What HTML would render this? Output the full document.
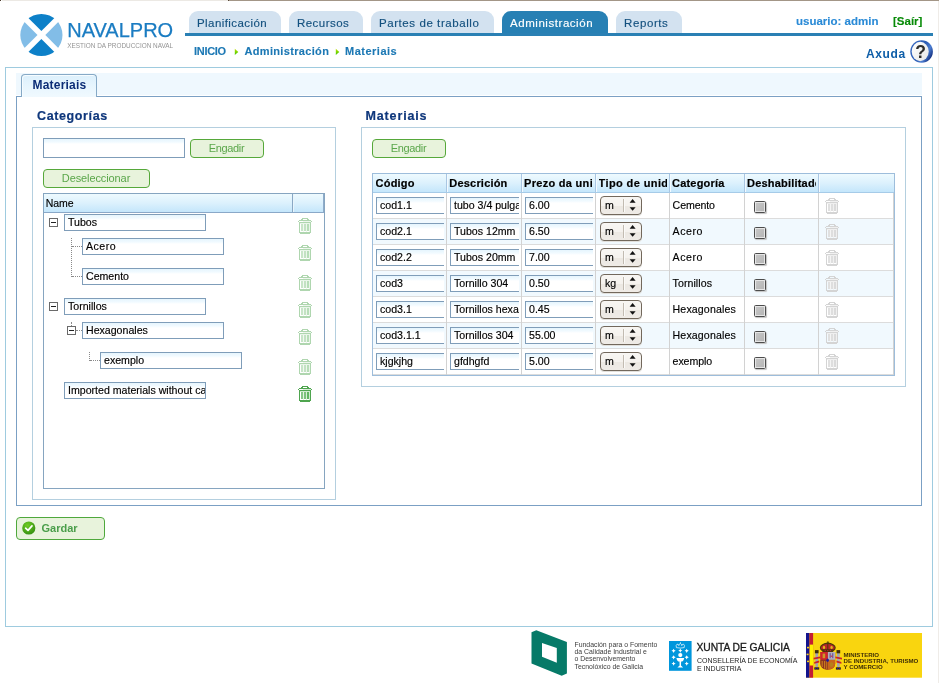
<!DOCTYPE html>
<html>
<head>
<meta charset="utf-8">
<title>NavalPro - Materiais</title>
<style>
html,body{margin:0;padding:0;}
body{width:939px;height:683px;position:relative;overflow:hidden;background:#fff;will-change:transform;font-family:"Liberation Sans",sans-serif;font-size:11px;color:#000;}
.abs{position:absolute;}
.t{position:absolute;white-space:nowrap;line-height:1;}
#strip-a{left:0;top:0;width:1px;height:1px;background:#4a3b2e;}
#strip-b{left:2px;top:0;width:226px;height:1px;background:#ece9e4;}
#strip-c{left:228px;top:0;width:711px;height:1px;background:#a39687;}
#strip-c2{left:228px;top:0;width:1px;height:1px;background:#5a4a3c;}
#strip-r{left:938px;top:1px;width:1px;height:682px;background:#efece8;}
.mtab{position:absolute;top:11px;height:22px;background:#d3e2f0;border-radius:9px 9px 0 0;color:#14517f;font-size:11.5px;white-space:nowrap;-webkit-text-stroke:.15px #14517f;}
.mtab span{position:absolute;top:7px;line-height:1;}
.mtab.on{background:#2780b4;color:#fff;-webkit-text-stroke:.15px #fff;}
#mline{left:185px;top:33px;width:748px;height:3px;background:#2a80b4;}
.bc{font-weight:bold;font-size:11px;color:#1c78b4;-webkit-text-stroke:.12px currentColor;}
#outer{left:5px;top:67px;width:926px;height:558px;border:1px solid #9ecbdf;}
#tabhead{left:16px;top:73px;width:906px;height:22px;background:#eff8fe;}
#tabpanel{left:16px;top:96px;width:904px;height:408px;border:1px solid #7ba0c4;background:#fff;}
#tab1{left:21px;top:74px;width:76px;height:23px;border:1px solid #86a9c6;border-bottom:none;border-radius:4px 4px 0 0;background:linear-gradient(#dcf0fc,#ebf7fe 70%,#f0f9fe);box-shadow:inset 1px 1px 0 #f6fcff;box-sizing:border-box;}
.gb{position:absolute;border:1px solid #b4cfdf;box-sizing:border-box;}
.h2{font-weight:bold;font-size:12.5px;color:#0f377c;-webkit-text-stroke:.2px #0f377c;}
.inp{position:absolute;box-sizing:border-box;border:1px solid #7f9db9;background:linear-gradient(#e6f5fd,#f1faff 3px,#fff 5px);height:17px;font-size:10.6px;line-height:15px;padding:0 0 0 3px;white-space:nowrap;overflow:hidden;color:#000;-webkit-text-stroke:.15px #000;}
.inp.c{border-right:none;}
.btn{position:absolute;box-sizing:border-box;border:1px solid #56a83a;border-radius:4px;background:#e8f3dc;color:#5aa64a;font-size:11px;text-align:center;padding-right:1px;}
.hdr{position:absolute;background:linear-gradient(#eefafe,#dcf1fd 50%,#c4e6fb);}
.pm{position:absolute;width:9px;height:9px;box-sizing:border-box;border:1px solid #6a6a6a;background:#fff;}
.pm i{position:absolute;left:1px;top:3px;width:5px;height:1px;background:#222;}
.dv{position:absolute;width:0;border-left:1px dotted #8a8a8a;}
.dh{position:absolute;height:0;border-top:1px dotted #8a8a8a;}
.gh{position:absolute;top:178px;height:13px;font-weight:bold;font-size:11px;line-height:1;white-space:nowrap;overflow:hidden;color:#000;letter-spacing:.2px;-webkit-text-stroke:.2px #000;}
.gc{position:absolute;-webkit-text-stroke:.15px #000;font-size:10.6px;line-height:1;white-space:nowrap;}
.row{position:absolute;left:373px;width:520px;height:25px;border-bottom:1px solid #dcdcdc;}
.row.o{background:#f1f9fe;}
.vs{position:absolute;top:193px;width:1px;height:182px;background:#d2d2d2;}
.hs{position:absolute;top:174px;width:1px;height:18px;background:#a9c6e2;}
.hs2{position:absolute;top:174px;width:1px;height:18px;background:#f2faff;}
.sel{position:absolute;width:42px;height:19px;box-sizing:border-box;border:1px solid #72685c;border-radius:4px;background:linear-gradient(#f8f6f3,#f5f2ee 50%,#ece8e2 52%,#efebe6);box-shadow:0 1px 0 #e2e0dc;}
.sel b{position:absolute;left:22px;top:2px;width:1px;height:13px;background:#c2bbb1;box-shadow:1px 0 0 #fbfaf8;}
.sel span{position:absolute;left:4px;top:3px;-webkit-text-stroke:.15px #000;font-size:10.6px;line-height:1;}
.sel svg{position:absolute;left:28px;top:2px;}
.cb{position:absolute;width:12px;height:12px;box-sizing:border-box;border:1px solid #4c4c4c;border-radius:1.5px;background:linear-gradient(135deg,#c8c8c8,#b4b4b4);box-shadow:inset 0 0 0 1px #e6e6e6,1px 1px 1px #c4c4c4;}
.ft{position:absolute;white-space:nowrap;line-height:1;}
</style>
</head>
<body>
<svg width="0" height="0" style="position:absolute">
  <defs>
    <symbol id="trash" viewBox="0 0 14 16">
      <g shape-rendering="crispEdges">
        <rect x="4" y="0" width="6" height="1" fill="#4fa54f"/>
        <rect x="3" y="1" width="2" height="1" fill="#4fa54f"/><rect x="9" y="1" width="2" height="1" fill="#4fa54f"/>
        <rect x="1" y="2" width="12" height="1" fill="#4fa54f"/>
        <rect x="0" y="3" width="1" height="1" fill="#4fa54f"/><rect x="13" y="3" width="1" height="1" fill="#4fa54f"/>
        <rect x="5" y="3" width="8" height="1" fill="#d6edd6"/>
        <rect x="1" y="4" width="12" height="1" fill="#4fa54f"/>
        <rect x="1" y="5" width="1" height="9" fill="#4fa54f"/><rect x="12" y="5" width="1" height="9" fill="#4fa54f"/>
        <rect x="2" y="5" width="10" height="1" fill="#cfe9cf"/>
        <rect x="3" y="6" width="2" height="7" fill="#86c686"/>
        <rect x="6" y="6" width="2" height="7" fill="#7cc17c"/>
        <rect x="9" y="6" width="2" height="7" fill="#62b562"/>
        <rect x="11" y="6" width="1" height="8" fill="#cfe9cf"/>
        <rect x="5" y="6" width="1" height="8" fill="#e4f3e4"/><rect x="8" y="6" width="1" height="8" fill="#d6edd6"/>
        <rect x="1" y="14" width="12" height="1" fill="#4fa54f"/>
        <rect x="2" y="15" width="10" height="1" fill="#4fa54f"/>
      </g>
    </symbol>
    <symbol id="trashg" viewBox="0 0 14 16">
      <g shape-rendering="crispEdges">
        <rect x="4" y="0" width="6" height="1" fill="#d4d4d4"/>
        <rect x="3" y="1" width="2" height="1" fill="#d4d4d4"/><rect x="9" y="1" width="2" height="1" fill="#d4d4d4"/>
        <rect x="1" y="2" width="12" height="1" fill="#d4d4d4"/>
        <rect x="0" y="3" width="1" height="1" fill="#d4d4d4"/><rect x="13" y="3" width="1" height="1" fill="#d4d4d4"/>
        <rect x="5" y="3" width="8" height="1" fill="#f0f0f0"/>
        <rect x="1" y="4" width="12" height="1" fill="#d4d4d4"/>
        <rect x="1" y="5" width="1" height="9" fill="#d4d4d4"/><rect x="12" y="5" width="1" height="9" fill="#d4d4d4"/>
        <rect x="2" y="5" width="10" height="1" fill="#efefef"/>
        <rect x="3" y="6" width="2" height="7" fill="#e0e0e0"/>
        <rect x="6" y="6" width="2" height="7" fill="#dedede"/>
        <rect x="9" y="6" width="2" height="7" fill="#dadada"/>
        <rect x="11" y="6" width="1" height="8" fill="#efefef"/>
        <rect x="5" y="6" width="1" height="8" fill="#f4f4f4"/><rect x="8" y="6" width="1" height="8" fill="#f0f0f0"/>
        <rect x="1" y="14" width="12" height="1" fill="#d4d4d4"/>
        <rect x="2" y="15" width="10" height="1" fill="#d4d4d4"/>
      </g>
    </symbol>
    <symbol id="arr" viewBox="0 0 8 13">
      <polygon points="3.6,0.1 6.6,3.7 0.6,3.7" fill="#111"/>
      <polygon points="3.6,11.8 6.6,8.2 0.6,8.2" fill="#111"/>
    </symbol>
  </defs>
</svg>
<div class="abs" id="strip-a"></div><div class="abs" id="strip-b"></div><div class="abs" id="strip-c"></div><div class="abs" id="strip-c2"></div><div class="abs" id="strip-r"></div>

<svg class="abs" style="left:18px;top:11px" width="48" height="48" viewBox="0 0 48 48">
  <defs><clipPath id="cc"><circle cx="23.4" cy="24" r="21.1"/></clipPath></defs>
  <g clip-path="url(#cc)">
    <polygon points="23.4,20.1 -1,-4.3 47.8,-4.3" fill="#0d80c8"/>
    <polygon points="23.4,27.9 -1,52.3 47.8,52.3" fill="#0d80c8"/>
    <polygon points="19.5,24 -4.9,-0.4 -4.9,48.4" fill="#82bde7"/>
    <polygon points="27.3,24 51.7,-0.4 51.7,48.4" fill="#82bde7"/>
  </g>
</svg>
<div class="t" id="lg1" style="left:67.2px;top:20px;font-size:20px;color:#1a7cc2;letter-spacing:0;-webkit-text-stroke:.25px #1a7cc2;">NAVALPRO</div>
<div class="t" id="lg2" style="left:67.3px;top:42.8px;font-size:6.42px;color:#939393;">XESTION DA PRODUCCION NAVAL</div>

<div class="mtab" style="left:189px;width:92px;"><span id="mt1" style="left:8px;letter-spacing:0.43px">Planificación</span></div>
<div class="mtab" style="left:289px;width:74px;"><span id="mt2" style="left:8px;letter-spacing:0.45px">Recursos</span></div>
<div class="mtab" style="left:371px;width:123px;"><span id="mt3" style="left:8px;letter-spacing:0.57px">Partes de traballo</span></div>
<div class="mtab on" style="left:502px;width:106px;"><span id="mt4" style="left:8px;letter-spacing:0.55px">Administración</span></div>
<div class="mtab" style="left:616px;width:66px;"><span id="mt5" style="left:8px;letter-spacing:0.6px">Reports</span></div>
<div class="abs" id="mline"></div>
<div class="t bc" id="usr" style="left:796px;top:16px;color:#2a8ad6;font-size:11.5px;">usuario: admin</div>
<div class="t bc" id="sair" style="left:893px;top:16px;color:#078a07;font-size:11.5px;">[Saír]</div>
<div class="t bc" id="bc1" style="left:194px;top:46px;letter-spacing:-.3px">INICIO</div>
<div class="t bc" id="bc2" style="left:244.5px;top:46px;letter-spacing:.33px">Administración</div>
<div class="t bc" id="bc3" style="left:345px;top:46px;letter-spacing:.5px">Materiais</div>
<svg class="abs" style="left:234px;top:48px" width="6" height="8"><defs><linearGradient id="ag" x1="0" y1="0" x2="0" y2="1"><stop offset="0" stop-color="#c4e200"/><stop offset="1" stop-color="#38c800"/></linearGradient></defs><polygon points="0.8,0.8 4.3,4 0.8,7.1" fill="url(#ag)"/></svg>
<svg class="abs" style="left:335px;top:48px" width="6" height="8"><polygon points="0.8,0.8 4.3,4 0.8,7.1" fill="url(#ag)"/></svg>
<div class="t" id="axuda" style="left:866px;top:48px;font-weight:bold;font-size:12px;color:#0e5ea8;letter-spacing:.6px;">Axuda</div>
<svg class="abs" style="left:908px;top:38px" width="28" height="28" viewBox="908 38 28 28">
  <defs>
    <linearGradient id="hg" x1="0" y1="0" x2="1" y2="0.6"><stop offset="0" stop-color="#3a6cc4"/><stop offset=".55" stop-color="#2c5cb4"/><stop offset=".8" stop-color="#4a7cd0"/><stop offset="1" stop-color="#1a3888"/></linearGradient>
    <linearGradient id="hg2" x1="0" y1="0" x2="1" y2="1"><stop offset="0" stop-color="#ffffff"/><stop offset="1" stop-color="#e6e6e6"/></linearGradient>
  </defs>
  <circle cx="921.6" cy="51.5" r="11.3" fill="url(#hg)"/>
  <ellipse cx="920.2" cy="51.5" rx="8.5" ry="9.7" fill="url(#hg2)"/>
  <text x="920.5" y="57.7" text-anchor="middle" font-family="Liberation Sans" font-weight="bold" font-size="17.5" fill="#2c2c2c">?</text>
</svg>
<div class="abs" id="outer"></div>
<div class="abs" id="tabhead"></div>
<div class="abs" id="tabpanel"></div>
<div class="abs" id="tab1"></div>
<div class="t" id="tab1t" style="left:32.5px;top:79px;font-weight:bold;font-size:12px;color:#0b2c76;letter-spacing:.2px">Materiais</div>
<div class="t h2" id="hcat" style="left:37px;top:110px;letter-spacing:.62px">Categorías</div>
<div class="t h2" id="hmat" style="left:365.5px;top:110px;letter-spacing:.86px">Materiais</div>
<div class="gb" style="left:32px;top:127px;width:304px;height:373px;"></div>
<div class="gb" style="left:361px;top:127px;width:545px;height:260px;"></div>
<div class="inp" style="left:43px;top:138px;width:142px;height:20px;"></div>
<div class="btn" id="b1" style="left:190px;top:139px;width:74px;height:19px;line-height:17px;letter-spacing:-.35px">Engadir</div>
<div class="btn" id="b2" style="left:43px;top:169px;width:107px;height:19px;line-height:17px;letter-spacing:-.1px">Deseleccionar</div>
<div class="abs" id="tree" style="left:43px;top:193px;width:282px;height:296px;border:1px solid #86a5c0;box-sizing:border-box;"></div>
<div class="hdr" style="left:44px;top:194px;width:280px;height:18px;border-bottom:1px solid #8aa8c8;"></div>
<div class="abs" style="left:323px;top:194px;width:1px;height:18px;background:#8eabca;"></div>
<div class="abs" style="left:292px;top:194px;width:1px;height:18px;background:#8aa8c4;"></div>
<div class="abs" style="left:293px;top:194px;width:1px;height:18px;background:#e8f5fd;"></div>
<div class="t" id="tname" style="left:45.7px;top:198.3px;font-size:10.5px;-webkit-text-stroke:.15px #000;">Name</div>

<div class="inp" id="ti1" style="left:64px;top:214px;width:142px;padding-left:3px;letter-spacing:0px">Tubos</div>
<div class="inp" id="ti2" style="left:82px;top:238px;width:142px;padding-left:3px;letter-spacing:0.5px">Acero</div>
<div class="inp" id="ti3" style="left:82px;top:268px;width:142px;padding-left:3px;letter-spacing:0px">Cemento</div>
<div class="inp" id="ti4" style="left:64px;top:298px;width:142px;padding-left:3px;letter-spacing:0px">Tornillos</div>
<div class="inp" id="ti5" style="left:82px;top:322px;width:142px;padding-left:3px;letter-spacing:0px">Hexagonales</div>
<div class="inp" id="ti6" style="left:100px;top:352px;width:142px;padding-left:3px;letter-spacing:0px">exemplo</div>
<div class="inp" id="ti7" style="left:64px;top:382px;width:142px;padding-left:3px;letter-spacing:0px">Imported materials without category</div>
<div class="pm" style="left:49px;top:218px"><i></i></div>
<div class="pm" style="left:49px;top:302px"><i></i></div>
<div class="pm" style="left:67px;top:326px"><i></i></div>
<div class="dv" style="left:71px;top:238px;height:39px"></div>
<div class="dh" style="left:72px;top:246px;width:10px"></div>
<div class="dh" style="left:72px;top:276px;width:10px"></div>
<div class="dv" style="left:71px;top:322px;height:4px"></div>
<div class="dh" style="left:76px;top:330px;width:6px"></div>
<div class="dv" style="left:89px;top:352px;height:9px"></div>
<div class="dh" style="left:90px;top:360px;width:10px"></div>
<svg class="abs" style="left:298px;top:218px;opacity:0.45" width="14" height="16"><use href="#trash"/></svg>
<svg class="abs" style="left:298px;top:245px;opacity:0.45" width="14" height="16"><use href="#trash"/></svg>
<svg class="abs" style="left:298px;top:275px;opacity:0.45" width="14" height="16"><use href="#trash"/></svg>
<svg class="abs" style="left:298px;top:302px;opacity:0.45" width="14" height="16"><use href="#trash"/></svg>
<svg class="abs" style="left:298px;top:329px;opacity:0.45" width="14" height="16"><use href="#trash"/></svg>
<svg class="abs" style="left:298px;top:359px;opacity:0.45" width="14" height="16"><use href="#trash"/></svg>
<svg class="abs" style="left:298px;top:386px;opacity:1" width="14" height="16"><use href="#trash"/></svg>
<div class="btn" id="b3" style="left:372px;top:139px;width:74px;height:19px;line-height:17px;letter-spacing:-.35px">Engadir</div>
<div class="abs" style="left:372px;top:173px;width:523px;height:203px;box-sizing:border-box;border:1px solid #9dbddb;"></div>
<div class="hdr" style="left:373px;top:174px;width:521px;height:18px;border-bottom:1px solid #a6cbe8;"></div>
<div class="hs" style="left:446px"></div><div class="hs2" style="left:447px"></div>
<div class="hs" style="left:521px"></div><div class="hs2" style="left:522px"></div>
<div class="hs" style="left:595px"></div><div class="hs2" style="left:596px"></div>
<div class="hs" style="left:669px"></div><div class="hs2" style="left:670px"></div>
<div class="hs" style="left:744px"></div><div class="hs2" style="left:745px"></div>
<div class="hs" style="left:818px"></div><div class="hs2" style="left:819px"></div>
<div class="gh" id="gh1" style="left:375.6px;width:68px;letter-spacing:0.2px">Código</div>
<div class="gh" id="gh2" style="left:449.3px;width:70px;letter-spacing:0.2px">Descrición</div>
<div class="gh" id="gh3" style="left:524px;width:68px;letter-spacing:0.3px">Prezo da unidade</div>
<div class="gh" id="gh4" style="left:598.5px;width:68px;letter-spacing:0.4px">Tipo de unidade</div>
<div class="gh" id="gh5" style="left:672px;width:70px;letter-spacing:0.2px">Categoría</div>
<div class="gh" id="gh6" style="left:747px;width:68.5px;letter-spacing:0.2px">Deshabilitado</div>
<div class="row" style="top:193px"></div>
<div class="row o" style="top:219px"></div>
<div class="row" style="top:245px"></div>
<div class="row o" style="top:271px"></div>
<div class="row" style="top:297px"></div>
<div class="row o" style="top:323px"></div>
<div class="row" style="top:349px"></div>
<div class="vs" style="left:446px"></div>
<div class="vs" style="left:521px"></div>
<div class="vs" style="left:595px"></div>
<div class="vs" style="left:669px"></div>
<div class="vs" style="left:744px"></div>
<div class="vs" style="left:818px"></div>
<div class="vs" style="left:893px"></div>
<div class="inp c" id="r0a" style="left:376px;top:197px;width:68px">cod1.1</div>
<div class="inp c" id="r0b" style="left:450px;top:197px;width:69px">tubo 3/4 pulgada</div>
<div class="inp c" id="r0c" style="left:525px;top:197px;width:68px">6.00</div>
<div class="sel" style="left:600px;top:196px"><span id="r0d">m</span><b></b><svg width="8" height="13"><use href="#arr"/></svg></div>
<div class="gc" id="r0e" style="left:672.6px;top:200px;letter-spacing:-0.1px">Cemento</div>
<div class="cb" style="left:754px;top:201px"></div>
<svg class="abs" style="left:825px;top:198px" width="14" height="16"><use href="#trashg"/></svg>
<div class="inp c" id="r1a" style="left:376px;top:223px;width:68px">cod2.1</div>
<div class="inp c" id="r1b" style="left:450px;top:223px;width:69px">Tubos 12mm</div>
<div class="inp c" id="r1c" style="left:525px;top:223px;width:68px">6.50</div>
<div class="sel" style="left:600px;top:222px"><span id="r1d">m</span><b></b><svg width="8" height="13"><use href="#arr"/></svg></div>
<div class="gc" id="r1e" style="left:672.6px;top:226px;letter-spacing:0.55px">Acero</div>
<div class="cb" style="left:754px;top:227px"></div>
<svg class="abs" style="left:825px;top:224px" width="14" height="16"><use href="#trashg"/></svg>
<div class="inp c" id="r2a" style="left:376px;top:249px;width:68px">cod2.2</div>
<div class="inp c" id="r2b" style="left:450px;top:249px;width:69px">Tubos 20mm</div>
<div class="inp c" id="r2c" style="left:525px;top:249px;width:68px">7.00</div>
<div class="sel" style="left:600px;top:248px"><span id="r2d">m</span><b></b><svg width="8" height="13"><use href="#arr"/></svg></div>
<div class="gc" id="r2e" style="left:672.6px;top:252px;letter-spacing:0.55px">Acero</div>
<div class="cb" style="left:754px;top:253px"></div>
<svg class="abs" style="left:825px;top:250px" width="14" height="16"><use href="#trashg"/></svg>
<div class="inp c" id="r3a" style="left:376px;top:275px;width:68px">cod3</div>
<div class="inp c" id="r3b" style="left:450px;top:275px;width:69px">Tornillo 304</div>
<div class="inp c" id="r3c" style="left:525px;top:275px;width:68px">0.50</div>
<div class="sel" style="left:600px;top:274px"><span id="r3d">kg</span><b></b><svg width="8" height="13"><use href="#arr"/></svg></div>
<div class="gc" id="r3e" style="left:672.6px;top:278px;letter-spacing:0.06px">Tornillos</div>
<div class="cb" style="left:754px;top:279px"></div>
<svg class="abs" style="left:825px;top:276px" width="14" height="16"><use href="#trashg"/></svg>
<div class="inp c" id="r4a" style="left:376px;top:301px;width:68px">cod3.1</div>
<div class="inp c" id="r4b" style="left:450px;top:301px;width:69px">Tornillos hexagonales</div>
<div class="inp c" id="r4c" style="left:525px;top:301px;width:68px">0.45</div>
<div class="sel" style="left:600px;top:300px"><span id="r4d">m</span><b></b><svg width="8" height="13"><use href="#arr"/></svg></div>
<div class="gc" id="r4e" style="left:672.6px;top:304px;letter-spacing:0.13px">Hexagonales</div>
<div class="cb" style="left:754px;top:305px"></div>
<svg class="abs" style="left:825px;top:302px" width="14" height="16"><use href="#trashg"/></svg>
<div class="inp c" id="r5a" style="left:376px;top:327px;width:68px">cod3.1.1</div>
<div class="inp c" id="r5b" style="left:450px;top:327px;width:69px">Tornillos 304</div>
<div class="inp c" id="r5c" style="left:525px;top:327px;width:68px">55.00</div>
<div class="sel" style="left:600px;top:326px"><span id="r5d">m</span><b></b><svg width="8" height="13"><use href="#arr"/></svg></div>
<div class="gc" id="r5e" style="left:672.6px;top:330px;letter-spacing:0.13px">Hexagonales</div>
<div class="cb" style="left:754px;top:331px"></div>
<svg class="abs" style="left:825px;top:328px" width="14" height="16"><use href="#trashg"/></svg>
<div class="inp c" id="r6a" style="left:376px;top:353px;width:68px">kjgkjhg</div>
<div class="inp c" id="r6b" style="left:450px;top:353px;width:69px">gfdhgfd</div>
<div class="inp c" id="r6c" style="left:525px;top:353px;width:68px">5.00</div>
<div class="sel" style="left:600px;top:352px"><span id="r6d">m</span><b></b><svg width="8" height="13"><use href="#arr"/></svg></div>
<div class="gc" id="r6e" style="left:672.6px;top:356px;letter-spacing:-0.08px">exemplo</div>
<div class="cb" style="left:754px;top:357px"></div>
<svg class="abs" style="left:825px;top:354px" width="14" height="16"><use href="#trashg"/></svg>
<div class="btn" style="left:16px;top:517px;width:89px;height:23px;border-color:#4fa83c;"></div>
<svg class="abs" style="left:21px;top:520px" width="16" height="16" viewBox="0 0 16 16">
  <defs><radialGradient id="gg" cx="0.4" cy="0.3" r="0.8"><stop offset="0" stop-color="#70cc24"/><stop offset="1" stop-color="#2e8a10"/></radialGradient></defs>
  <circle cx="7.8" cy="8" r="6.6" fill="url(#gg)"/>
  <path d="M4.6 8.2 L7 10.4 L11 5.9" fill="none" stroke="#fff" stroke-width="1.7" stroke-linecap="round" stroke-linejoin="round"/>
</svg>
<div class="t" id="gardar" style="left:41.5px;top:523px;font-weight:bold;font-size:11px;color:#4a9e4a;">Gardar</div>

<svg class="abs" style="left:527px;top:627px" width="48" height="53" viewBox="527 627 48 53">
  <path d="M531.5 632.3 L536.3 630.3 L566.9 642.1 L566.9 673.5 L561.7 675.7 L531.5 663.4 Z M542 643 L542 656.8 L556.8 662.8 L556.8 647.9 Z" fill="#067a68" fill-rule="evenodd"/>
</svg>
<div class="ft" id="f1a" style="left:574.5px;top:641.5px;font-size:6.9px;color:#3c3c3c;">Fundación para o Fomento</div>
<div class="ft" id="f1b" style="left:574.5px;top:649px;font-size:6.9px;color:#3c3c3c;">da Calidade Industrial e</div>
<div class="ft" id="f1c" style="left:574.5px;top:656px;font-size:6.9px;color:#3c3c3c;">o Desenvolvemento</div>
<div class="ft" id="f1d" style="left:574.5px;top:664px;font-size:6.9px;color:#3c3c3c;">Tecnolóxico de Galicia</div>
<svg class="abs" style="left:669px;top:641px" width="23" height="30" viewBox="669 641 23 30">
  <rect x="669" y="641" width="22.6" height="29.8" fill="#0096dc"/>
  <g fill="#fff">
    <path d="M676.4 647.6 Q675.6 645 677 644.2 Q678.6 644 678.8 645.6 Q679.2 643.8 680.3 643.2 Q681.4 643.8 681.8 645.6 Q682 644 683.6 644.2 Q685 645 684.2 647.6 Q680.3 648.6 676.4 647.6 Z" fill="none" stroke="#fff" stroke-width=".7"/>
    <rect x="680" y="642.3" width=".6" height="1.4"/>
    <circle cx="680.3" cy="655.1" r="2.1"/>
    <path d="M676.4 657.9 L684.2 657.9 Q683.6 661.4 681.1 661.6 L681 665.4 L683.1 667.6 L677.4 667.6 L679.6 665.4 L679.5 661.6 Q677 661.4 676.4 657.9 Z"/>
    <g id="st"><path d="M0 -2.1 L.7 -.7 L2.1 0 L.7 .7 L0 2.1 L-.7 .7 L-2.1 0 L-.7 -.7 Z" transform="translate(673.6 650.8)"/></g>
    <path d="M0 -2.1 L.7 -.7 L2.1 0 L.7 .7 L0 2.1 L-.7 .7 L-2.1 0 L-.7 -.7 Z" transform="translate(680.3 650.6)"/>
    <path d="M0 -2.1 L.7 -.7 L2.1 0 L.7 .7 L0 2.1 L-.7 .7 L-2.1 0 L-.7 -.7 Z" transform="translate(686.7 650.8)"/>
    <path d="M0 -2.1 L.7 -.7 L2.1 0 L.7 .7 L0 2.1 L-.7 .7 L-2.1 0 L-.7 -.7 Z" transform="translate(673.6 657.3)"/>
    <path d="M0 -2.1 L.7 -.7 L2.1 0 L.7 .7 L0 2.1 L-.7 .7 L-2.1 0 L-.7 -.7 Z" transform="translate(686.7 657.3)"/>
    <path d="M0 -2.1 L.7 -.7 L2.1 0 L.7 .7 L0 2.1 L-.7 .7 L-2.1 0 L-.7 -.7 Z" transform="translate(673.6 663.6)"/>
    <path d="M0 -2.1 L.7 -.7 L2.1 0 L.7 .7 L0 2.1 L-.7 .7 L-2.1 0 L-.7 -.7 Z" transform="translate(686.7 663.6)"/>
  </g>
</svg>
<div class="ft" id="f2" style="left:696.5px;top:642.5px;font-size:10.3px;color:#1a1a1a;letter-spacing:-.06px;-webkit-text-stroke:.3px #1a1a1a;">XUNTA DE GALICIA</div>
<div class="ft" id="f3" style="left:697px;top:656.7px;font-size:7px;color:#222;">CONSELLERÍA DE ECONOMÍA</div>
<div class="ft" id="f4" style="left:697px;top:664.9px;font-size:7px;color:#222;">E INDUSTRIA</div>
<svg class="abs" style="left:806px;top:633px" width="116" height="45" viewBox="806 633 116 45">
  <rect x="806" y="633" width="116" height="44.7" fill="#f9d50f"/>
  <rect x="806" y="633" width="3.5" height="44.7" fill="#14148e"/>
  <rect x="809.5" y="633" width="3.6" height="44.7" fill="#c41e34"/>
  <rect x="809.7" y="644.6" width="3.4" height="20.9" fill="#fff200"/>
  <g fill="#f4d020"><rect x="807" y="646.8" width="2" height="1.6"/><rect x="806.6" y="653.6" width="2" height="1.6"/><rect x="807" y="660.6" width="2" height="1.6"/></g>
  <!-- crown -->
  <rect x="827.5" y="641.2" width=".8" height="2.6" fill="#4a3a08"/>
  <rect x="826.6" y="641.9" width="2.6" height=".7" fill="#4a3a08"/>
  <ellipse cx="827.8" cy="647.7" rx="7.4" ry="4.3" fill="#b8242a" stroke="#4a3a08" stroke-width="1.1"/>
  <ellipse cx="824" cy="647.4" rx="1.2" ry="1.6" fill="#e0b818"/>
  <ellipse cx="831.6" cy="647.4" rx="1.2" ry="1.6" fill="#e0b818"/>
  <path d="M827.8 643.6 L827.8 650" stroke="#4a3a08" stroke-width="1"/>
  <path d="M822 649.2 L833.6 649.2 L833 652.2 L822.6 652.2 Z" fill="#4e300a"/>
  <g fill="#c8202a"><circle cx="825.2" cy="650.6" r=".7"/><circle cx="827.8" cy="650.6" r=".7"/><circle cx="830.4" cy="650.6" r=".7"/></g>
  <!-- shield -->
  <path d="M820.4 652 L835.2 652 L835.2 663.4 Q835.2 669.4 827.8 669.8 Q820.4 669.4 820.4 663.4 Z" fill="#9a3a20"/>
  <rect x="820.4" y="652" width="7.3" height="7.6" fill="#d0222c"/>
  <rect x="827.9" y="652" width="7.3" height="7.8" fill="#b2b0bc"/>
  <path d="M827.9 660 L835.2 660 L835.2 663.4 Q835.2 668.6 827.9 669.6 Z" fill="#c8641c"/>
  <path d="M820.4 660 L827.6 660 L827.6 669.6 Q820.4 668.6 820.4 663.4 Z" fill="#8c3420"/>
  <g fill="#c87a1c"><rect x="821.6" y="661" width="1.2" height="6"/><rect x="824" y="661" width="1.2" height="7.6"/><rect x="826.2" y="661" width="1" height="8"/></g>
  <rect x="822.6" y="653.6" width="2.6" height="4.6" fill="#cc9a28"/>
  <rect x="829.6" y="653.2" width="1.1" height="5" fill="#6a4aa0"/><rect x="832.2" y="653.2" width="1.1" height="5" fill="#6a4aa0"/><rect x="830.6" y="655.6" width="1.8" height="1.2" fill="#c8323a"/>
  <ellipse cx="827.6" cy="660.2" rx="1.3" ry="1.8" fill="#1c1ca0"/>
  <ellipse cx="831.4" cy="664.6" rx="2" ry="2.4" fill="#b8801c"/>
  <!-- pillars -->
  <g>
    <rect x="815.4" y="653" width="2.7" height="14.4" fill="#a4a2b0"/>
    <rect x="814.9" y="650.1" width="3.7" height="3.2" fill="#3e2c08"/>
    <rect x="814.3" y="667.3" width="4.9" height="2.3" fill="#3a2808"/>
    <rect x="815" y="668" width="1.2" height="1.2" fill="#1c1ca0"/><rect x="817.2" y="668" width="1.2" height="1.2" fill="#1c1ca0"/>
    <path d="M813.6 657.8 L820.2 656.6 L820.2 658.2 L813.6 659.6 Z M814.2 662 L819.2 660.6 L819.2 662.4 L814.2 663.8 Z" fill="#c8222c"/>
    <rect x="837" y="653" width="2.7" height="14.4" fill="#a4a2b0"/>
    <rect x="836.5" y="650.1" width="3.7" height="3.2" fill="#3e2c08"/>
    <rect x="835.9" y="667.3" width="4.9" height="2.3" fill="#3a2808"/>
    <rect x="836.8" y="668" width="1.2" height="1.2" fill="#1c1ca0"/><rect x="839" y="668" width="1.2" height="1.2" fill="#1c1ca0"/>
    <path d="M835.4 656.6 L842 657.8 L842 659.6 L835.4 658.2 Z M836.4 660.6 L841.4 662 L841.4 663.8 L836.4 662.4 Z" fill="#c8222c"/>
  </g>
</svg>
<div class="ft" id="f5" style="left:843.5px;top:651.6px;font-size:6.1px;font-weight:bold;color:#3e2e06;">MINISTERIO</div>
<div class="ft" id="f6" style="left:843.5px;top:657.8px;font-size:6.1px;font-weight:bold;color:#3e2e06;">DE INDUSTRIA, TURISMO</div>
<div class="ft" id="f7" style="left:843.5px;top:663.9px;font-size:6.1px;font-weight:bold;color:#3e2e06;">Y COMERCIO</div>
</body>
</html>
